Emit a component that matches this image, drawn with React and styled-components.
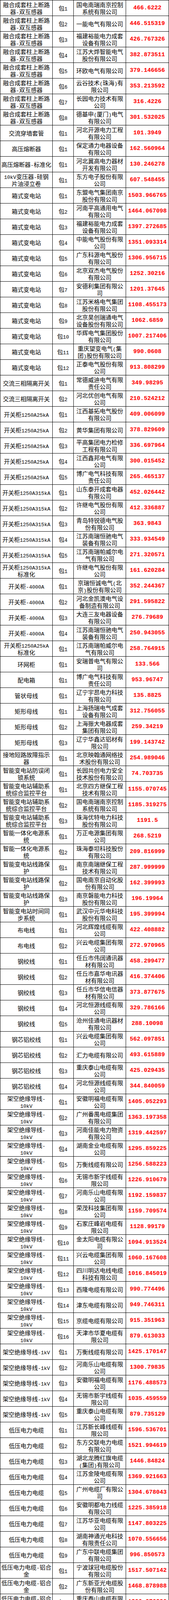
import React from 'react';
import styled, { createGlobalStyle } from 'styled-components';

const GlobalStyle = createGlobalStyle`
  html, body { margin: 0; padding: 0; background: #ffffff; }
  body {
    font-family: "Noto Sans CJK SC", "Noto Sans", sans-serif;
    color: #000000;
  }
`;

const Sheet = styled.div`
  width: 433px;
  box-sizing: border-box;
  border-top: 1px solid #000;
  border-left: 1px solid #000;
`;

const Row = styled.div`
  display: grid;
  grid-template-columns: 134px 54px 134px 110px;
  grid-template-rows: 40px;
  height: 40px;
`;

const Cell = styled.div`
  box-sizing: border-box;
  height: 40px;
  min-width: 0;
  border-right: 1px solid #000;
  border-bottom: 1px solid #000;
  display: flex;
  flex-direction: column;
  align-items: center;
  justify-content: center;
  font-size: 15px;
  line-height: 18px;
  text-align: center;
`;

const PriceCell = styled(Cell)`
  color: #ff0000;
  font-family: "Liberation Mono", monospace;
  font-weight: 700;
  font-size: 15px;
`;

const Line = styled.div`
  flex: none;
  height: 18px;
  line-height: 18px;
  white-space: nowrap;
`;

const Half = styled.span`
  font-family: "Liberation Mono", monospace;
  font-size: 13px;
  line-height: 1;
`;

const groups = [
  ['融合成套柱上断路|器-双互感器', [
    ['国电南瑞南京控制|系统有限公司', '466.6222'],
    ['一能电气有限公司', '446.515319'],
    ['福建裕能电力成套|设备有限公司', '426.767326'],
    ['江苏大烨智能电气|股份有限公司', '382.873511'],
    ['环欧电气有限公司', '379.146656'],
    ['云谷技术(珠海)有|限公司', '353.213592'],
    ['长园电力技术有限|公司', '316.4226'],
    ['德基申(厦门)电气|有限公司', '301.532025'],
  ]],
  ['交流穿墙套管', [['河北开源电力工程|有限公司', '101.3949']]],
  ['高压熔断器', [['保定通力电器设备|有限公司', '162.560964']]],
  ['高压熔断器-标准化', [['河北冀高电力器材|开发有限公司', '130.246278']]],
  ['10kV变压器-硅钢|片油浸立卷', [['东方电子股份有限|公司', '607.548455']]],
  ['箱式变电站', [
    ['东盟电气集团南京|股份有限公司', '1503.966765'],
    ['河南平高通用电气|有限公司', '1464.067098'],
    ['福建裕能电力成套|设备有限公司', '1397.272685'],
    ['中能电气股份有限|公司', '1351.093314'],
    ['广东科源电气股份|有限公司', '1306.956715'],
    ['北京双杰电气股份|有限公司', '1252.30216'],
    ['安德利集团有限公|司', '1201.37645'],
    ['江苏米格电气集团|股份有限公司', '1108.455173'],
    ['北京昊创瑞通电气|设备股份有限公司', '1062.6859'],
    ['华辉电气集团股份|有限公司', '1007.217406'],
    ['重庆望变电气(集|团)股份有限公司', '990.0608'],
    ['正泰电气股份有限|公司', '913.808299'],
  ]],
  ['交流三相隔离开关', [
    ['常德威迪电气有限|责任公司', '349.98295'],
    ['河北优创电气有限|公司', '210.524212'],
  ]],
  ['开关柜1250A25kA', [
    ['江西基拓电气股份|有限公司', '409.006099'],
    ['黄华集团有限公司', '378.829609'],
    ['平高集团电力检修|工程有限公司', '336.697964'],
    ['江西鑫邦电气有限|公司', '300.015452'],
    ['博广电气科技有限|责任公司', '265.465137'],
  ]],
  ['开关柜1250A315kA', [
    ['山东泰开成套电器|有限公司', '452.026442'],
    ['许继电气股份有限|公司', '412.336887'],
    ['青岛特锐德电气股|份有限公司', '363.9843'],
    ['江苏南瑞恒驰电气|装备有限公司', '333.934549'],
    ['江苏南瑞帕威尔电|气有限公司', '271.320571'],
  ]],
  ['开关柜1250A315kA|标准化', [['许继电气股份有限|公司', '161.620284']]],
  ['开关柜-4000A', [
    ['京瑞恒诚电气(北|京)股份有限公司', '352.244367'],
    ['河北金凯澳电气设|备制造有限公司', '291.595822'],
    ['大连三友电器设备|有限公司', '276.79689'],
    ['江苏南瑞恒驰电气|装备有限公司', '250.943055'],
  ]],
  ['开关柜1250A25kA|标准化', [['江苏南瑞帕威尔电|气有限公司', '258.764915']]],
  ['环网柜', [['安瑞普电气有限公|司', '133.566']]],
  ['配电箱', [['博广电气科技有限|责任公司', '953.96747']]],
  ['管状母线', [['辽宁宇昂电力科技|有限公司', '135.8825']]],
  ['矩形母线', [
    ['上海扬瑞电气成套|设备有限公司', '312.756055'],
    ['上海振大电器成套|集团有限公司', '259.34219'],
    ['辽宁华鑫达铝材有|限公司', '199.143742'],
  ]],
  ['接地短路故障指示|器', [['北京映翰通网络技|术股份有限公司', '254.989046']]],
  ['智能变电站防误闭|锁系统', [['长园共创电力安全|技术股份有限公司', '74.703735']]],
  ['智能变电站辅助系|统综合监控平台', [
    ['北京四方继保工程|技术有限公司', '1155.070745'],
    ['国电南瑞南京控制|系统有限公司', '1185.319275'],
    ['珠海优特电力科技|股份有限公司', '1191.5'],
  ]],
  ['智能一体化电源系|统', [
    ['万正电源集团有限|公司', '268.5219'],
    ['珠海泰坦科技股份|有限公司', '209.816999'],
  ]],
  ['智能变电站线路保|护', [
    ['南京南瑞继保工程|技术有限公司', '287.999999'],
    ['国电南京自动化股|份有限公司', '162.399993'],
    ['南京磐能电力科技|股份有限公司', '196.19964'],
  ]],
  ['智能变电站时间同|步系统', [['武汉中元华电科技|股份有限公司', '195.399994']]],
  ['布电线', [
    ['河北辉煌线缆有限|公司', '422.408882'],
    ['兴云电缆集团有限|公司', '272.970965'],
  ]],
  ['钢绞线', [
    ['任丘市伟阔通讯器|材有限公司', '458.299477'],
    ['任丘市嘉华电讯器|材有限公司', '416.374406'],
    ['任丘市华信电信器|材有限公司', '373.877675'],
    ['河北恒源线缆有限|公司', '329.786166'],
    ['沧州佳通电讯器材|有限公司', '288.10098'],
  ]],
  ['钢芯铝绞线', [
    ['兴云电缆集团有限|公司', '562.097851'],
    ['汇力电缆有限公司', '493.615889'],
    ['重庆泰山电缆有限|公司', '425.029435'],
    ['河北恒源线缆有限|公司', '344.840059'],
  ]],
  ['架空绝缘导线-|10kV', [
    ['安徽明福电缆有限|公司', '1405.052293'],
    ['广州番禺电缆集团|有限公司', '1363.197358'],
    ['河南佳能电力物资|有限公司', '1319.442597'],
    ['湖南金业电缆有限|公司', '1295.859225'],
    ['万衡线缆有限公司', '1256.588223'],
    ['无锡市新宇线缆有|限公司', '1226.910679'],
    ['河南乐山电缆有限|公司', '1192.159837'],
    ['荣茂科技集团有限|公司', '1159.709574'],
    ['石家庄峰岩电缆有|限公司', '1128.99179'],
    ['金太阳电缆有限公|司', '1094.913524'],
    ['兴云电缆集团有限|公司', '1060.167608'],
    ['四川明达电线电缆|科技有限公司', '1016.845019'],
    ['西隆电缆有限公司', '990.774496'],
    ['津东电缆有限公司', '949.746311'],
    ['京缆电缆有限公司', '915.351963'],
    ['天津市华夏电缆有|限公司', '879.613033'],
  ]],
  ['架空绝缘导线-1kV', [
    ['万衡线缆有限公司', '1425.170147'],
    ['河南乐山电缆有限|公司', '1300.79835'],
    ['安徽明福电缆有限|公司', '1176.488573'],
    ['无锡市新宇线缆有|限公司', '1035.459559'],
    ['重庆泰山电缆有限|公司', '879.735129'],
  ]],
  ['低压电力电缆', [
    ['江苏新长峰线缆有|限公司', '1596.536701'],
    ['东方交联电力电缆|有限公司', '1521.994619'],
    ['湖北龙腾红旗电缆|(集团)有限公司', '1446.84824'],
    ['江苏金陵电缆有限|公司', '1369.921663'],
    ['广州电缆厂有限公|司', '1304.678043'],
    ['安徽明都电力线缆|有限公司', '1225.385918'],
    ['江苏华亚电缆有限|公司', '1147.803225'],
    ['湖南神通光电科技|有限责任公司', '1070.556656'],
    ['广东中联电缆集团|有限公司', '996.850573'],
  ]],
  ['低压电力电缆-铝合|金', [
    ['宁波球冠电缆股份|有限公司', '1517.507142'],
    ['广东新亚光电缆股|份有限公司', '1468.878988'],
    ['重庆泰山电缆有限|公司', '1390.276386'],
    ['江苏宝安电缆股份|有限公司', '1261.394923'],
    ['无锡市新宇线缆有|限公司', '1200.023125'],
    ['江苏红峰电缆集团|有限公司', '1072.944728'],
    ['锐洋集团东北电缆|有限公司', '1016.717759'],
  ]],
  ['电力电缆', [
    ['万衡线缆有限公司', '2483.260564'],
    ['湖北龙腾红旗电缆|(集团)有限公司', '2471.747844'],
    ['河北金力电缆有限|公司', '2445.328656'],
    ['民丰电缆集团有限|公司', '2414.701928'],
    ['湖南金业电缆有限|公司', '2388.011758'],
    ['荣茂科技集团有限|公司', '2358.846956'],
    ['津东电缆有限公司', '2335.745306'],
    ['河北通力电缆有限|公司', '2317.896361'],
    ['金太阳电缆有限公|司', '2288.035088'],
    ['江苏鑫峰电缆有限|公司', '2260.339475'],
    ['江西省越光电缆股|份有限公司', '2223.282172'],
    ['宏鑫电缆有限公司', '2199.411262'],
    ['天津市华夏电缆有|限公司', '2170.622094'],
    ['江苏长远电缆有限|公司', '2141.36584'],
    ['江苏远通电缆有限|公司', '2131.533578'],
    ['浙江万马股份有限|公司', '2044.826434'],
    ['西隆电缆有限公司', '2062.237967'],
    ['无锡市新宇线缆有|限公司', '2035.173156'],
    ['新疆金成线缆制造|有限公司', '2006.635773'],
    ['兴胜山鹰线缆有限|公司', '1990.875777'],
    ['广州珠江电缆有限|公司', '1916.601277'],
    ['广东双利电缆有限|公司', '1902.81943'],
    ['京缆电缆有限公司', '1882.269795'],
    ['吉林省亚丰线缆有|限公司', '1846.778821'],
    ['广州岭南电缆股份|有限公司', '1825.904759'],
    ['江苏江扬电缆有限|公司', '1762.200937'],
    ['杭州华新电力线缆|有限公司', '1754.26737'],
    ['宁波球冠电缆股份|有限公司', '1762.221243'],
    ['宁波东方电缆股份|有限公司', '1730.788651'],
    ['福建南平太阳电缆|股份有限公司', '1697.486196'],
    ['安徽明都电力线缆|有限公司', '1676.157036'],
    ['湖北力生电缆有限|公司', '1645.976853'],
    ['贵州天虹志远电线|电缆有限公司', '1611.609419'],
    ['四川九洲线缆有限|责任公司', '1560.867549'],
    ['虹峰电缆有限公司', '1560.925511'],
  ]],
  ['电力电缆-铝合金', [
    ['兴胜山鹰线缆有限|公司', '619.205588'],
    ['万衡线缆有限公司', '517.589651'],
    ['宁波球冠电缆股份|有限公司', '387.379823'],
  ]],
  ['控制电缆', [['湖南力通恒裕电缆|科技有限公司', '508.190677']]],
  ['电缆附件', [
    ['华依电缆附件有限|公司', '332.337756'],
    ['长缆科技集团股份|有限公司', '270.837149'],
    ['江苏宇诚业基电气|设备有限公司', '207.214238'],
  ]],
  ['电缆保护管-MPP', [
    ['盐城嘉诚塑胶有限|公司', '972.098405'],
    ['芜湖市星宇电器有|限公司', '919.09072'],
    ['河北塑龙塑料管道|制造有限公司', '904.908649'],
    ['河北轩驰塑料制品|有限公司', '866.530048'],
    ['河北瑞万塑料制品|有限公司', '831.051236'],
    ['连云港鑫宝管业有|限公司', '788.174996'],
    ['无锡金源电力电信|塑胶有限公司', '756.29224'],
    ['山东成武天润管业|有限公司', '713.943587'],
    ['任丘市智宇通讯器|材有限公司', '680.777461'],
    ['山东丽景电力器材|有限公司', '645.939871'],
    ['江苏秀能电力材料|有限公司', '610.263233'],
  ]],
  ['电缆保护管-UPVC', [['河南中光学集团有|限公司', '504.139107']]],
  ['电缆保护管-CPVC', [['河北瑞万塑料制品|有限公司', '81.67784']]],
];

const rows = groups.flatMap(([item, entries]) =>
  entries.map(([company, price], i) => ({ item, pkg: `包${i + 1}`, company, price }))
);

function Runs({ text }) {
  const parts = text.match(/[\x00-\xff]+|[^\x00-\xff]+/g) || [];
  return parts.map((p, i) =>
    /[\x00-\xff]/.test(p) ? <Half key={i}>{p}</Half> : <React.Fragment key={i}>{p}</React.Fragment>
  );
}

function Lines({ text }) {
  return text.split('|').map((l, i) => (
    <Line key={i}>
      <Runs text={l} />
    </Line>
  ));
}

export default function App() {
  return (
    <>
      <GlobalStyle />
      <Sheet>
        {rows.map((r, i) => (
          <Row key={i}>
            <Cell><Lines text={r.item} /></Cell>
            <Cell><Lines text={r.pkg} /></Cell>
            <Cell><Lines text={r.company} /></Cell>
            <PriceCell><Line>{r.price}</Line></PriceCell>
          </Row>
        ))}
      </Sheet>
    </>
  );
}
